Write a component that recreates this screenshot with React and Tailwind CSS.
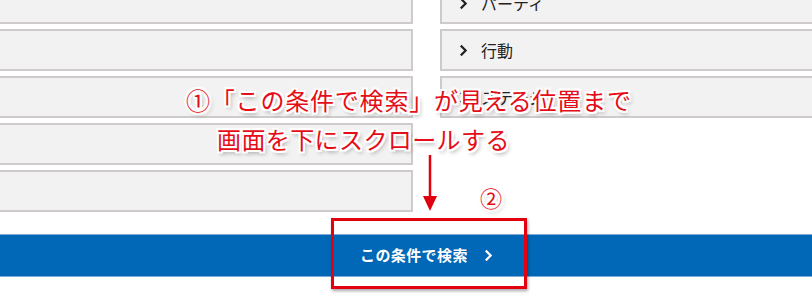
import React from "react";

const Chevron = ({ className, sw = "1.9" }) => (
  <svg viewBox="0 0 8 12" className={className} fill="none" stroke="currentColor" strokeWidth={sw}>
    <polyline points="1.5,1.5 6,6 1.5,10.5" />
  </svg>
);

const Box = ({ children }) => (
  <div className="h-[42px] bg-[#f2f2f2] border-2 border-[#cfcbcb] flex items-center pl-[17px] text-[16px] text-[#222]">
    {children}
  </div>
);

const Item = ({ label }) => (
  <Box>
    <Chevron className="w-[9px] h-[13px] text-[#222]" sw="2" />
    <span className="ml-[13px]">{label}</span>
  </Box>
);

const outline =
  "[text-shadow:-2px_-2px_0_#fff,2px_-2px_0_#fff,-2px_2px_0_#fff,2px_2px_0_#fff,0_-2px_0_#fff,0_2px_0_#fff,-2px_0_0_#fff,2px_0_0_#fff,2px_3px_4px_rgba(0,0,0,0.45)]";

export default function App() {
  return (
    <div className="relative w-[812px] h-[308px] overflow-hidden bg-white font-['Noto_Sans_CJK_JP','Noto_Sans',sans-serif]">
      <div className="flex gap-[27px] -mt-[18px] -ml-[2px] -mr-[4px]">
        <div className="w-[415px] flex flex-col gap-[5px]">
          <Box />
          <Box />
          <Box />
          <Box />
          <Box />
        </div>
        <div className="flex-1 flex flex-col gap-[5px]">
          <Item label="パーティ" />
          <Item label="行動" />
          <Item label="ステージ" />
        </div>
      </div>

      <div className="mt-[22px] h-[43px] bg-[#0068b7] border-y border-[#7fa9d6] flex items-center pl-[360px] text-white">
        <span className="text-[15px] font-bold tracking-[0.4px]">この条件で検索</span>
        <Chevron className="ml-[16px] w-[9px] h-[13px] text-white" sw="2" />
      </div>

      {/* annotations */}
      <div className={`absolute left-[186px] top-[84px] text-[24px] leading-[32px] tracking-[0.8px] text-[#e50d17] whitespace-nowrap ${outline}`}>
        ①「この条件で検索」が見える位置まで
      </div>
      <div className={`absolute left-[217px] top-[123px] text-[24px] leading-[32px] tracking-[0.4px] text-[#e50d17] whitespace-nowrap ${outline}`}>
        画面を下にスクロールする
      </div>

      <svg className="absolute left-[422px] top-[154px]" width="16" height="58" viewBox="0 0 16 58">
        <line x1="8" y1="1" x2="8" y2="46" stroke="#e0000e" strokeWidth="2.5" />
        <polygon points="1,42 15,42 8,57" fill="#e0000e" />
      </svg>

      <div className={`absolute left-[480px] top-[182px] text-[22px] leading-[30px] text-[#e50d17] ${outline}`}>
        ②
      </div>

      <div className="absolute left-[331px] top-[218px] w-[196px] h-[71px] border-[3px] border-[#e4000f] shadow-[1px_2px_3px_rgba(0,0,0,0.35)]" />
    </div>
  );
}
